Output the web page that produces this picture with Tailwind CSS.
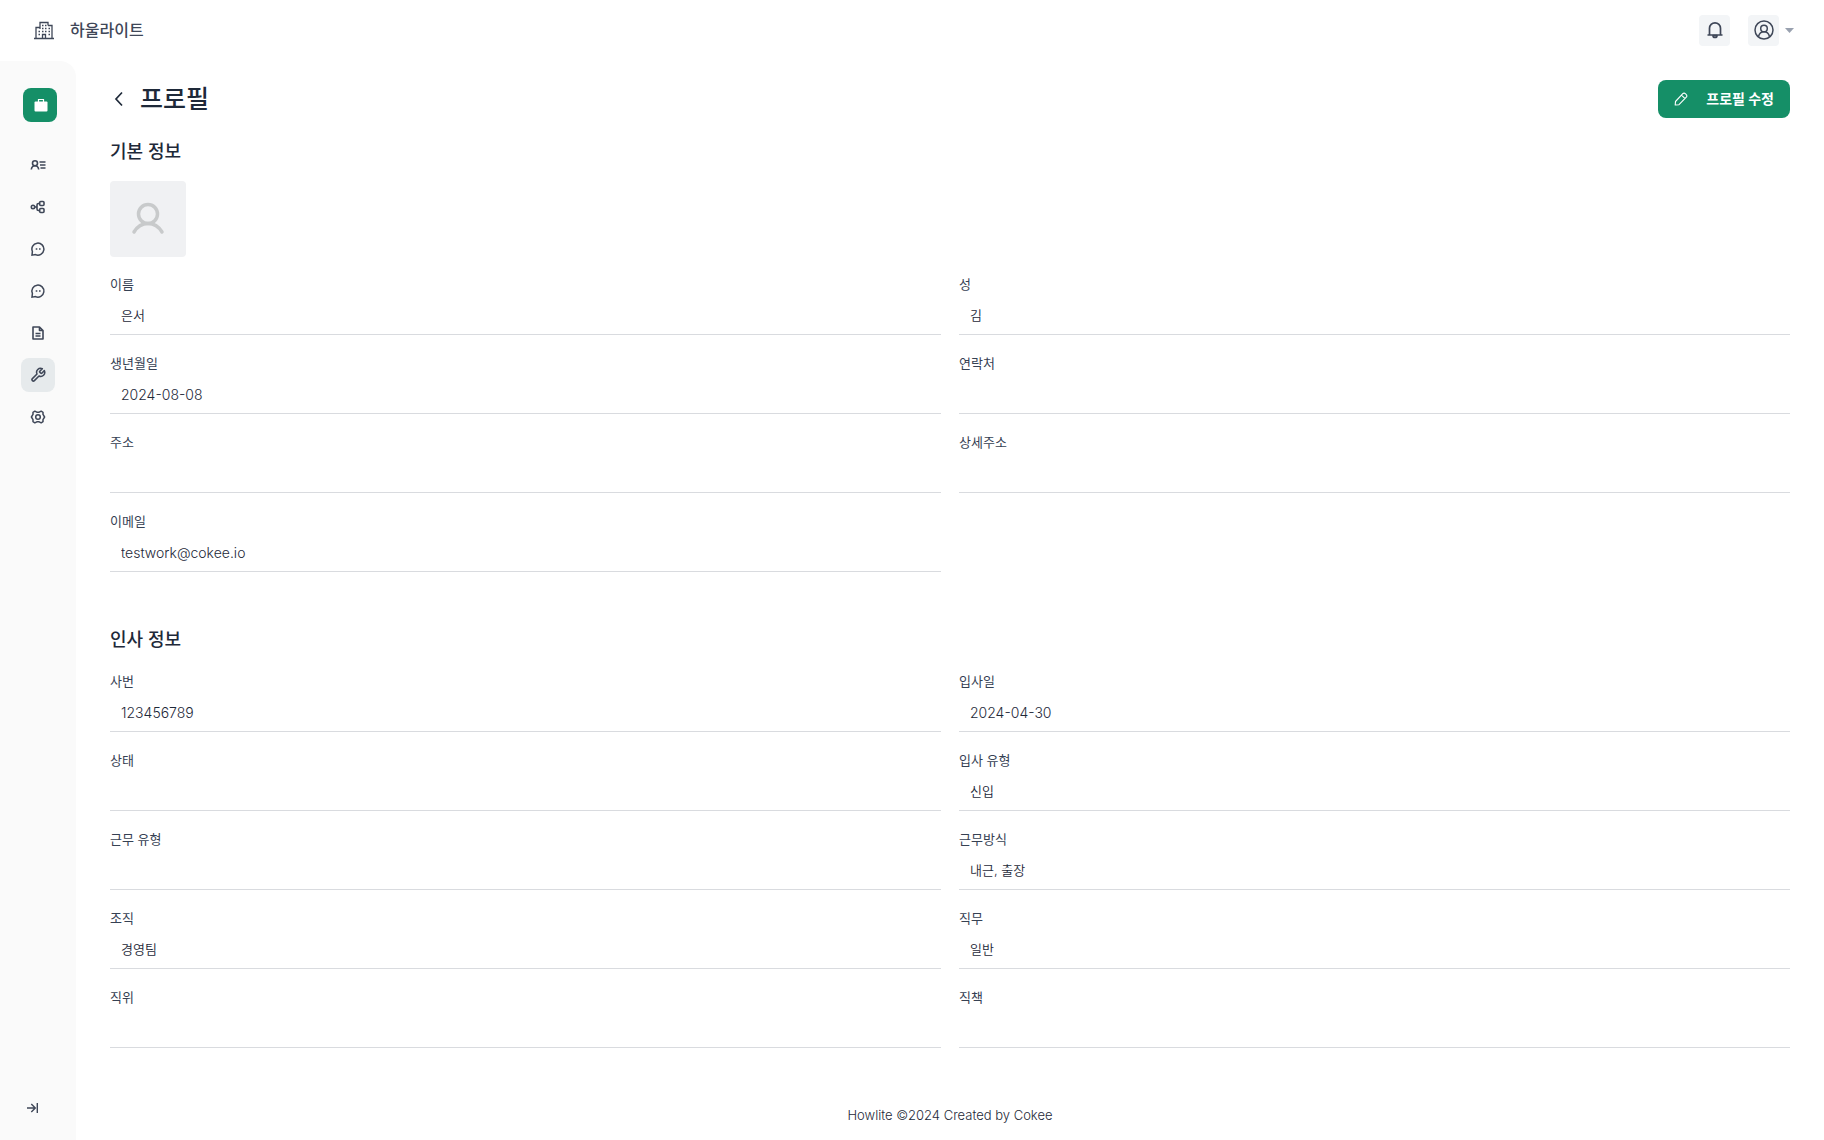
<!DOCTYPE html>
<html lang="ko">
<head>
  <meta charset="UTF-8">
  <meta name="viewport" content="width=device-width, initial-scale=1">
  <title>프로필</title>
  <script src="https://cdn.jsdelivr.net/npm/@tailwindcss/browser@4"></script>
</head>
<body class="bg-white text-gray-800 min-h-screen flex flex-col font-[Inter,'Noto_Sans_CJK_KR',sans-serif]">

  <header class="h-[61px] shrink-0 flex items-center justify-between pb-px pl-[34px] pr-[30px]">
    <a href="#" class="flex items-center gap-4 text-[#3f4758]">
      <svg class="w-5 h-5" viewBox="0 0 20 20" fill="none" stroke="currentColor" stroke-width="1.3">
        <path d="M0 18.500h20M2 18V7.500h4M6 7.500V2.500h8v3M14 5.500h4V18M6 7.500V9"/>
        <path d="M8 5.500h1.500M11 5.500h1.500M8 8.500h1.500M11 8.500h1.500M14.500 8.500H16M4.500 11.500H6M8 11.500h1.500M11 11.500h1.500M14.500 11.500H16M4.500 14.500H6M14.500 14.500H16" stroke-width="1.400"/>
        <path d="M8.500 18v-3.500h3V18"/>
      </svg>
      <span class="text-base font-medium">하울라이트</span>
    </a>
    <div class="flex items-center gap-[18px]">
      <button aria-label="알림" class="w-[31px] h-[31px] rounded-sm bg-[#f3f5f7] text-[#3f4758] flex items-center justify-center">
        <svg class="w-[18px] h-[18px]" viewBox="0 0 18 18" fill="none" stroke="currentColor" stroke-width="1.700" stroke-linejoin="round">
          <path d="M1.500 14h15M3.500 14V7.300a5.500 5.500 0 0 1 11 0V14"/>
          <path d="M7 14.500a2 2 0 0 0 4 0z"/>
        </svg>
      </button>
      <div class="flex items-center gap-[6px]">
        <button aria-label="내 계정" class="w-[31px] h-[31px] rounded-sm bg-[#f3f5f7] text-[#3f4758] flex items-center justify-center">
          <svg class="w-5 h-5" viewBox="0 0 20 20" fill="none" stroke="currentColor" stroke-width="1.500">
            <circle cx="10" cy="10" r="9"/>
            <circle cx="10" cy="8.500" r="3.300"/>
            <path d="M4.500 16.500c.8-3 2.800-4.700 5.500-4.700s4.700 1.700 5.500 4.700"/>
          </svg>
        </button>
        <svg class="w-[9px] h-[5px] text-gray-400" viewBox="0 0 9 5" fill="currentColor"><path d="M0 0h9L4.500 5z"/></svg>
      </div>
    </div>
  </header>

  <div class="flex-1 flex">
    <aside class="w-[76px] shrink-0 rounded-tr-2xl bg-[#fafafa] flex flex-col pb-[23px] text-[#3f4758]">
      <button aria-label="업무" class="ml-[23px] mt-[27px] w-[34px] h-[34px] rounded-lg bg-[#158f67] text-white flex items-center justify-center">
        <svg class="w-[14px] h-[14px] ml-[2px]" viewBox="0 0 14 14" fill="currentColor">
          <rect x=".5" y="3.500" width="13" height="10" rx="1"/>
          <path d="M4.500 4V1.500h5V4" fill="none" stroke="currentColor" stroke-width="1.200"/>
        </svg>
      </button>
      <nav class="mt-[26px] ml-[21px] flex flex-col gap-2">
        <a href="#" aria-label="구성원" class="w-[34px] h-[34px] rounded-lg flex items-center justify-center">
          <svg class="w-4 h-4" viewBox="0 0 16 16" fill="none" stroke="currentColor" stroke-width="1.600">
            <circle cx="5" cy="6.200" r="2.500"/>
            <path d="M1.300 12.500c.3-2.500 1.700-3.800 3.700-3.800s3.400 1.300 3.700 3.800M9.500 5H15.500M10 8h5.500M10.500 11h5"/>
          </svg>
        </a>
        <a href="#" aria-label="조직도" class="w-[34px] h-[34px] rounded-lg flex items-center justify-center">
          <svg class="w-4 h-4" viewBox="0 0 16 16" fill="none" stroke="currentColor" stroke-width="1.600">
            <circle cx="3" cy="8" r="1.700"/>
            <rect x="9.700" y="2.500" width="4.300" height="4" rx="1"/>
            <rect x="9.700" y="9.500" width="4.300" height="4" rx="1"/>
            <path d="M4.800 8H7M9.500 4.500H8.500Q7 4.500 7 6v4q0 1.500 1.500 1.500h1"/>
          </svg>
        </a>
        <a href="#" aria-label="메시지" class="w-[34px] h-[34px] rounded-lg flex items-center justify-center">
          <svg class="w-4 h-4" viewBox="0 0 16 16" fill="none" stroke="currentColor" stroke-width="1.500">
            <path d="M2 14.200l.4-3.700A6 6 0 1 1 5.500 13.600z"/>
            <path d="M5.700 8h1.600M9 8h1.600" stroke-width="1.600"/>
          </svg>
        </a>
        <a href="#" aria-label="상담" class="w-[34px] h-[34px] rounded-lg flex items-center justify-center">
          <svg class="w-4 h-4" viewBox="0 0 16 16" fill="none" stroke="currentColor" stroke-width="1.500">
            <path d="M2 14.200l.4-3.700A6 6 0 1 1 5.500 13.600z"/>
            <path d="M5.700 8h1.600M9 8h1.600" stroke-width="1.600"/>
          </svg>
        </a>
        <a href="#" aria-label="문서" class="w-[34px] h-[34px] rounded-lg flex items-center justify-center">
          <svg class="w-4 h-4" viewBox="0 0 16 16" fill="none" stroke="currentColor" stroke-width="1.600" stroke-linejoin="round">
            <path d="M3 2h6.500L13 5.500V14H3zM9.500 2v3.500H13M5.500 8.500h5M5.500 11h5"/>
          </svg>
        </a>
        <a href="#" aria-label="도구" aria-current="page" class="w-[34px] h-[34px] rounded-lg bg-[#e6eaec] flex items-center justify-center">
          <svg class="w-4 h-4" viewBox="0 0 24 24" fill="none" stroke="currentColor" stroke-width="2.300" stroke-linejoin="round">
            <path d="M14.700 6.300a1 1 0 0 0 0 1.400l1.600 1.600a1 1 0 0 0 1.400 0l3.800-3.800a6 6 0 0 1-8 8l-6.900 6.900a2.100 2.100 0 0 1-3-3l6.900-6.900a6 6 0 0 1 8-8z"/>
          </svg>
        </a>
        <a href="#" aria-label="설정" class="w-[34px] h-[34px] rounded-lg flex items-center justify-center">
          <svg class="w-4 h-4" viewBox="0 0 16 16" fill="none" stroke="currentColor" stroke-width="1.500" stroke-linejoin="round">
            <path d="M4.800 2.200L6.800 3.200H9.200L11.200 2.200 13 3.300V5.400L14.600 8 13 10.600v2.100l-1.800 1.100-2-1H6.800l-2 1L3 12.700v-2.100L1.400 8 3 5.400V3.300z"/>
            <circle cx="8" cy="8" r="2.300"/>
          </svg>
        </a>
      </nav>
      <button aria-label="메뉴 펼치기" class="mt-auto ml-[26px] w-[18px] h-[18px]">
        <svg class="w-[14px] h-[18px]" viewBox="0 0 14 18" fill="none" stroke="currentColor" stroke-width="1.400">
          <path d="M1 9h8M5.300 5l4 4-4 4M11.300 4v10"/>
        </svg>
      </button>
    </aside>

    <div class="flex-1 min-w-0 flex flex-col px-[34px]">
      <main class="flex-1 pt-[19px]">
        <div class="flex items-center justify-between">
          <div class="flex items-center gap-[14px]">
            <a href="#" aria-label="뒤로" class="text-gray-800">
              <svg class="w-4 h-4" viewBox="0 0 16 16" fill="none" stroke="currentColor" stroke-width="1.700"><path d="M12 1.500L6 8l6 6.500"/></svg>
            </a>
            <h1 class="text-[25px] font-medium leading-[38px]">프로필</h1>
          </div>
          <button class="w-[132px] h-[38px] rounded-lg bg-[#158f67] text-white text-sm font-bold flex items-center justify-between px-4">
            <svg class="w-[14px] h-[14px]" viewBox="0 0 14 14" fill="none" stroke="currentColor" stroke-width="1.100" stroke-linejoin="round">
              <path d="M1.500 9.500l7.300-7.800a1.700 1.700 0 0 1 2.500 0l1 1a1.700 1.700 0 0 1 0 2.500L5 12.700l-3.800.300zM7.500 3.200l3.500 3.500"/>
            </svg>
            프로필 수정
          </button>
        </div>

        <section>
          <h2 class="mt-5 text-lg leading-7 font-medium">기본 정보</h2>
          <div class="mt-[15px] w-[76px] h-[76px] rounded-sm bg-[#f0f1f3] text-[#c8cacb] flex items-center justify-center">
            <svg class="w-9 h-9" viewBox="0 0 36 36" fill="none" stroke="currentColor" stroke-width="3.500" stroke-linecap="round">
              <circle cx="18" cy="13" r="9.500"/>
              <path d="M4 31C7 26 12 22.500 18 22.500S29 26 32 31"/>
            </svg>
          </div>
          <div class="mt-[18px] grid grid-cols-2 gap-x-[18px] gap-y-[19px]">
            <div>
              <label for="firstName" class="block mb-[2px] text-[13px] leading-[18px] text-gray-700">이름</label>
              <input id="firstName" readonly value="은서" class="block w-full h-10 px-[11px] border-b border-[#d9dbdf] text-[13px] font-[350] outline-none">
            </div>
            <div>
              <label for="lastName" class="block mb-[2px] text-[13px] leading-[18px] text-gray-700">성</label>
              <input id="lastName" readonly value="김" class="block w-full h-10 px-[11px] border-b border-[#d9dbdf] text-[13px] font-[350] outline-none">
            </div>
            <div>
              <label for="birth" class="block mb-[2px] text-[13px] leading-[18px] text-gray-700">생년월일</label>
              <input id="birth" readonly value="2024-08-08" class="block w-full h-10 pt-[2px] px-[11px] border-b border-[#d9dbdf] text-sm font-light outline-none">
            </div>
            <div>
              <label for="phone" class="block mb-[2px] text-[13px] leading-[18px] text-gray-700">연락처</label>
              <input id="phone" readonly class="block w-full h-10 pt-[2px] px-[11px] border-b border-[#d9dbdf] text-sm font-light outline-none">
            </div>
            <div>
              <label for="address" class="block mb-[2px] text-[13px] leading-[18px] text-gray-700">주소</label>
              <input id="address" readonly class="block w-full h-10 pt-[2px] px-[11px] border-b border-[#d9dbdf] text-sm font-light outline-none">
            </div>
            <div>
              <label for="addressDetail" class="block mb-[2px] text-[13px] leading-[18px] text-gray-700">상세주소</label>
              <input id="addressDetail" readonly class="block w-full h-10 pt-[2px] px-[11px] border-b border-[#d9dbdf] text-sm font-light outline-none">
            </div>
            <div>
              <label for="email" class="block mb-[2px] text-[13px] leading-[18px] text-gray-700">이메일</label>
              <input id="email" readonly value="testwork@cokee.io" class="block w-full h-10 pt-[2px] px-[11px] border-b border-[#d9dbdf] text-sm font-light outline-none">
            </div>
          </div>
        </section>

        <section>
          <h2 class="mt-[54px] text-lg leading-7 font-medium">인사 정보</h2>
          <div class="mt-[18px] grid grid-cols-2 gap-x-[18px] gap-y-[19px]">
            <div>
              <label for="employeeNo" class="block mb-[2px] text-[13px] leading-[18px] text-gray-700">사번</label>
              <input id="employeeNo" readonly value="123456789" class="block w-full h-10 pt-[2px] px-[11px] border-b border-[#d9dbdf] text-sm font-light outline-none">
            </div>
            <div>
              <label for="joinDate" class="block mb-[2px] text-[13px] leading-[18px] text-gray-700">입사일</label>
              <input id="joinDate" readonly value="2024-04-30" class="block w-full h-10 pt-[2px] px-[11px] border-b border-[#d9dbdf] text-sm font-light outline-none">
            </div>
            <div>
              <label for="status" class="block mb-[2px] text-[13px] leading-[18px] text-gray-700">상태</label>
              <input id="status" readonly class="block w-full h-10 pt-[2px] px-[11px] border-b border-[#d9dbdf] text-sm font-light outline-none">
            </div>
            <div>
              <label for="joinType" class="block mb-[2px] text-[13px] leading-[18px] text-gray-700">입사 유형</label>
              <input id="joinType" readonly value="신입" class="block w-full h-10 px-[11px] border-b border-[#d9dbdf] text-[13px] font-[350] outline-none">
            </div>
            <div>
              <label for="workType" class="block mb-[2px] text-[13px] leading-[18px] text-gray-700">근무 유형</label>
              <input id="workType" readonly class="block w-full h-10 pt-[2px] px-[11px] border-b border-[#d9dbdf] text-sm font-light outline-none">
            </div>
            <div>
              <label for="workMode" class="block mb-[2px] text-[13px] leading-[18px] text-gray-700">근무방식</label>
              <input id="workMode" readonly value="내근, 출장" class="block w-full h-10 px-[11px] border-b border-[#d9dbdf] text-[13px] font-[350] outline-none">
            </div>
            <div>
              <label for="team" class="block mb-[2px] text-[13px] leading-[18px] text-gray-700">조직</label>
              <input id="team" readonly value="경영팀" class="block w-full h-10 px-[11px] border-b border-[#d9dbdf] text-[13px] font-[350] outline-none">
            </div>
            <div>
              <label for="job" class="block mb-[2px] text-[13px] leading-[18px] text-gray-700">직무</label>
              <input id="job" readonly value="일반" class="block w-full h-10 px-[11px] border-b border-[#d9dbdf] text-[13px] font-[350] outline-none">
            </div>
            <div>
              <label for="rank" class="block mb-[2px] text-[13px] leading-[18px] text-gray-700">직위</label>
              <input id="rank" readonly class="block w-full h-10 pt-[2px] px-[11px] border-b border-[#d9dbdf] text-sm font-light outline-none">
            </div>
            <div>
              <label for="position" class="block mb-[2px] text-[13px] leading-[18px] text-gray-700">직책</label>
              <input id="position" readonly class="block w-full h-10 pt-[2px] px-[11px] border-b border-[#d9dbdf] text-sm font-light outline-none">
            </div>
          </div>
        </section>
      </main>

      <footer class="pb-[15px] text-center text-[13px] leading-5 font-light">Howlite ©2024 Created by Cokee</footer>
    </div>
  </div>

</body>
</html>
